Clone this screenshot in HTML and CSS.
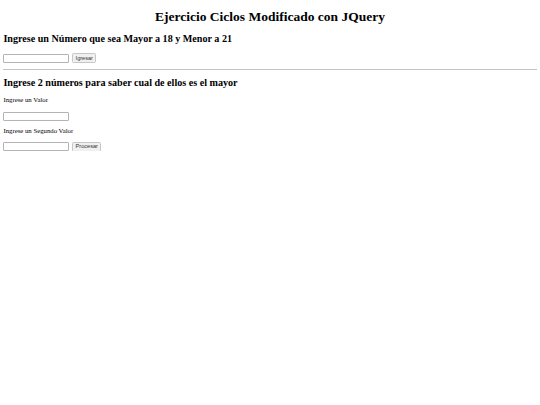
FILE: index.html
```html
<!DOCTYPE html>
<html lang="es">
<head>
<meta charset="utf-8">
<title>Ejercicio Ciclos Modificado con JQuery</title>
<link rel="stylesheet" href="styles.css">
</head>
<body class="page">
  <h1 class="title">Ejercicio Ciclos Modificado con JQuery</h1>
  <h2 class="section-title">Ingrese un Número que sea Mayor a 18 y Menor a 21</h2>
  <div class="field-row row-first">
    <input class="text-input" type="text">
    <button class="btn" type="button">Igresar</button>
  </div>
  <hr class="divider">
  <h2 class="section-title section-second">Ingrese 2 números para saber cual de ellos es el mayor</h2>
  <p class="label">Ingrese un Valor</p>
  <div class="field-row row-value">
    <input class="text-input" type="text">
  </div>
  <p class="label">Ingrese un Segundo Valor</p>
  <div class="field-row">
    <input class="text-input" type="text">
    <button class="btn" type="button">Procesar</button>
  </div>
</body>
</html>
```
FILE: styles.css
```css
html {
  background: #ffffff;
}
.page {
  margin: 0;
  padding: 9px 3.4px 0;
  font-family: "Liberation Serif", "Times New Roman", serif;
  font-size: 6.75px;
  color: #000000;
}
.title {
  font-size: 13.5px;
  line-height: 15.5px;
  font-weight: bold;
  text-align: center;
  margin: 0 0 8.5px;
}
.section-title {
  font-size: 10.125px;
  line-height: 11.6px;
  font-weight: bold;
  margin: 0 0 9px;
}
.section-second {
  margin-bottom: 7.5px;
}
.field-row {
  display: flex;
  align-items: center;
  gap: 3px;
  height: 9px;
  margin: 0;
}
.row-first {
  margin-bottom: 6.4px;
}
.row-value {
  margin-bottom: 5.6px;
}
.label {
  font-size: 6.75px;
  line-height: 7.8px;
  margin: 0 0 8px;
}
.text-input {
  box-sizing: border-box;
  width: 66px;
  height: 9px;
  margin: 0;
  padding: 0 1px;
  border: 1px solid #b4b4b4;
  border-radius: 1px;
  background: #ffffff;
  font-family: "Liberation Sans", Arial, sans-serif;
  font-size: 5.6px;
}
.btn {
  box-sizing: border-box;
  height: 9.5px;
  margin: 0;
  padding: 0 2.2px;
  border: 1px solid #c6c6c6;
  border-radius: 1.5px;
  background: #f0f0f0;
  color: #333333;
  font-family: "Liberation Sans", Arial, sans-serif;
  font-size: 5.6px;
  line-height: 7px;
}
.divider {
  height: 0;
  border: 0;
  border-top: 1px solid #c4c4c4;
  margin: 0 0 7.2px;
}
```
